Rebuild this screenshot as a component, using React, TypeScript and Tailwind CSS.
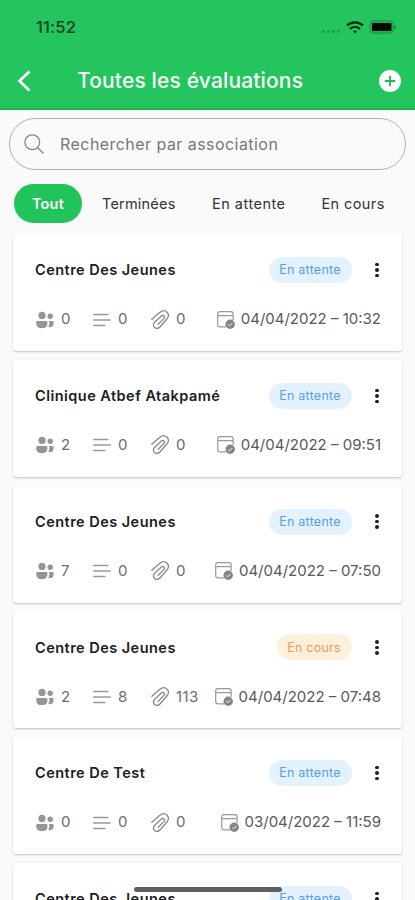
type Status = 'En attente' | 'En cours';

interface Evaluation {
  name: string;
  status: Status;
  people: number;
  notes: number;
  files: number;
  date: string;
}

const EVALUATIONS: Evaluation[] = [
  { name: 'Centre Des Jeunes', status: 'En attente', people: 0, notes: 0, files: 0, date: '04/04/2022 – 10:32' },
  { name: 'Clinique Atbef Atakpamé', status: 'En attente', people: 2, notes: 0, files: 0, date: '04/04/2022 – 09:51' },
  { name: 'Centre Des Jeunes', status: 'En attente', people: 7, notes: 0, files: 0, date: '04/04/2022 – 07:50' },
  { name: 'Centre Des Jeunes', status: 'En cours', people: 2, notes: 8, files: 113, date: '04/04/2022 – 07:48' },
  { name: 'Centre De Test', status: 'En attente', people: 0, notes: 0, files: 0, date: '03/04/2022 – 11:59' },
  { name: 'Centre Des Jeunes', status: 'En attente', people: 0, notes: 0, files: 0, date: '03/04/2022 – 11:42' },
];

function PeopleIcon() {
  return (
    <svg viewBox="0 0 18 18" className="size-[18px]" fill="#959595">
      <circle cx="6" cy="4.4" r="3.6" />
      <circle cx="14.2" cy="5.2" r="2.7" />
      <path d="M1.5 10h8.7q1.2 0 1.2 1.2v1.3c0 3-2.2 4.7-5.6 4.7S.3 15.5.3 12.5v-1.3Q.3 10 1.5 10z" />
      <path d="M12.4 10h4q1.2 0 1.2 1.2v1.1c0 2.8-1.800 4.300-4.800 4-.5 0-.6-.3-.3-.7.6-.9.8-1.800.8-3v-1.400q0-.7-.9-1.200z" />
    </svg>
  );
}

function LinesIcon() {
  return (
    <svg viewBox="0 0 18 16" className="h-4 w-[18px]" stroke="#999" strokeWidth="1.5" strokeLinecap="round">
      <path d="M.8 2.5h14M.8 8h16.4M.8 13.5h11" />
    </svg>
  );
}

function ClipIcon() {
  return (
    <svg viewBox="0 0 18 20" className="h-5 w-[18px]" fill="none" stroke="#888" strokeWidth="1.3" strokeLinecap="round" strokeLinejoin="round">
      <path d="M.8 9.300 8.600 2.600c2.600-2.200 5.700-2.200 7.500-.3 1.800 2 1.600 4.700-.4 6.900L8.900 17c-1.600 1.800-3.900 1.900-5.400.500s-1.400-3.700.2-5.300l6.600-6.200c.9-.8 2-.8 2.700 0s.6 1.800-.2 2.600l-5.600 5.600" />
    </svg>
  );
}

function CalendarIcon() {
  return (
    <svg viewBox="0 0 18 18" className="size-[18px]" fill="none">
      <path d="M9 15.800H3Q.7 15.800.7 13.500V3Q.7.700 3 .700h10.800q2.300 0 2.300 2.300v6M.7 4.600h15.400" stroke="#999" strokeWidth="1.200" />
      <circle cx="13.2" cy="13.2" r="4.7" fill="#858585" />
      <path d="m11.300 13.600 1.300 1.200 2.600-2.700" stroke="#fff" strokeWidth="1" />
    </svg>
  );
}

function StatusBar() {
  return (
    <div className="flex h-[54px] items-center justify-between pl-9 pr-[19px]">
      <span className="text-[16.5px] font-medium tracking-[0.2px] text-[#06401b]">11:52</span>
      <div className="flex items-center">
        <div className="mr-[6px] mt-[9px] flex gap-[2px]">
          {[0, 1, 2, 3].map((i) => (
            <span key={i} className="size-[3px] rounded-full bg-[#1a9a46]" />
          ))}
        </div>
        <svg viewBox="0 0 18 13" className="mr-[5px] h-[13px] w-[18px]" fill="none" stroke="#05250f" strokeWidth="2.1">
          <path d="M1 4.600c4.600-4.300 11.400-4.300 16 0M4 7.900c2.900-2.600 7.100-2.600 10 0" />
          <path d="m9 12.300-2.100-2.100c1.200-1 3-1 4.200 0z" fill="#05250f" stroke="none" />
        </svg>
        <svg viewBox="0 0 27 14" className="h-[14px] w-[27px]">
          <rect x="1" y=".7" width="23.5" height="12.6" rx="3.5" fill="#1fae50" stroke="#1b9c48" />
          <rect x="3" y="3" width="19.5" height="8" rx="1" fill="#010a04" />
          <path d="M25.300 5q1.500.500 1.500 2t-1.500 2z" fill="#127535" />
        </svg>
      </div>
    </div>
  );
}

function Header() {
  return (
    <header className="h-[110px] shrink-0 border-b-2 border-[#18b851] bg-[#24c55e]">
      <StatusBar />
      <div className="flex h-[54px] items-center pl-[17px] pr-[14px]">
        <svg viewBox="0 0 14 22" className="h-[22px] w-[14px]" fill="none" stroke="#fff" strokeWidth="2.8">
          <path d="M12.5 1.5 2.5 11l10 9.5" />
        </svg>
        <h1 className="ml-[46px] flex-1 whitespace-nowrap text-[21px] font-medium tracking-[0.15px] text-[#f4fff7]">
          Toutes les évaluations
        </h1>
        <svg viewBox="0 0 22 22" className="size-[22px]">
          <circle cx="11" cy="11" r="11" fill="#fff" />
          <path d="M11 5.800v10.400M5.800 11h10.400" stroke="#24b558" strokeWidth="1.8" />
        </svg>
      </div>
    </header>
  );
}

function SearchBar() {
  return (
    <div className="mx-[9px] mt-2 flex h-[52px] shrink-0 items-center rounded-full border border-[#b2b2b2] pl-[14px]">
      <svg viewBox="0 0 20 20" className="size-5" fill="none" stroke="#858585" strokeWidth="1.3" strokeLinecap="round">
        <circle cx="8.3" cy="8.3" r="7.4" />
        <path d="m13.700 13.700 5.300 5.300" />
      </svg>
      <span className="ml-4 text-[16px] tracking-[0.45px] text-[#777]">Rechercher par association</span>
    </div>
  );
}

function Tabs() {
  return (
    <nav className="mt-[14px] flex h-[39px] shrink-0 items-center whitespace-nowrap pl-[14px] text-[14.5px] tracking-[0.5px] text-[#333]">
      <span className="flex h-[39px] w-[68px] items-center justify-center rounded-full bg-[#20c45a] pt-px font-semibold tracking-[0.2px] text-white">
        Tout
      </span>
      <span className="ml-5 w-[110px] pt-px tracking-[0.2px]">Terminées</span>
      <span className="w-[109.5px] pt-px">En attente</span>
      <span className="pt-px tracking-[0.4px]">En cours</span>
    </nav>
  );
}

function EvaluationCard({ item }: { item: Evaluation }) {
  const badge =
    item.status === 'En cours' ? 'w-[75px] bg-[#fff0dc] text-[#f79a58]' : 'w-[83px] bg-[#e4f2ff] text-[#549eef]';

  return (
    <article className="h-[117px] shrink-0 rounded-[3px] bg-white shadow-[0_1px_2px_rgba(0,0,0,0.22)]">
      <div className="flex h-[72px] items-center pl-[22px] pr-[23.5px]">
        <h2 className="flex-1 whitespace-nowrap text-[14.5px] font-semibold tracking-[0.47px] text-[#202020]">{item.name}</h2>
        <span className={`flex h-[26px] items-center justify-center rounded-full pt-px text-[12.5px] tracking-[0.25px] ${badge}`}>
          {item.status}
        </span>
        <div className="ml-[23.5px] flex flex-col gap-[2px]">
          <span className="size-[3.5px] rounded-full bg-[#1e1e1e]" />
          <span className="size-[3.5px] rounded-full bg-[#1e1e1e]" />
          <span className="size-[3.5px] rounded-full bg-[#1e1e1e]" />
        </div>
      </div>
      <div className="flex h-[27px] items-center whitespace-nowrap pl-[23px] pr-[21px] text-[15px] text-[#6c6c6c]">
        <PeopleIcon />
        <span className="ml-[7px] w-8">{item.people}</span>
        <LinesIcon />
        <span className="ml-[7px] w-[33px]">{item.notes}</span>
        <ClipIcon />
        <span className="ml-[7px] tracking-[0.4px]">{item.files}</span>
        <div className="ml-auto flex items-center gap-[6px]">
          <CalendarIcon />
          <span className="text-[#585858]">{item.date}</span>
        </div>
      </div>
    </article>
  );
}

export default function App() {
  return (
    <div className="relative flex h-[900px] w-[415px] flex-col overflow-hidden bg-[#fafafa] font-['Inter',sans-serif]">
      <Header />
      <SearchBar />
      <Tabs />
      <main className="mt-[11px] flex flex-col gap-[8.8px] px-[13px]">
        {EVALUATIONS.map((item, idx) => (
          <EvaluationCard key={idx} item={item} />
        ))}
      </main>
      {/* home indicator */}
      <div className="absolute bottom-[8.5px] left-[134px] h-[5px] w-[148px] rounded-full bg-[#606060]" />
    </div>
  );
}
